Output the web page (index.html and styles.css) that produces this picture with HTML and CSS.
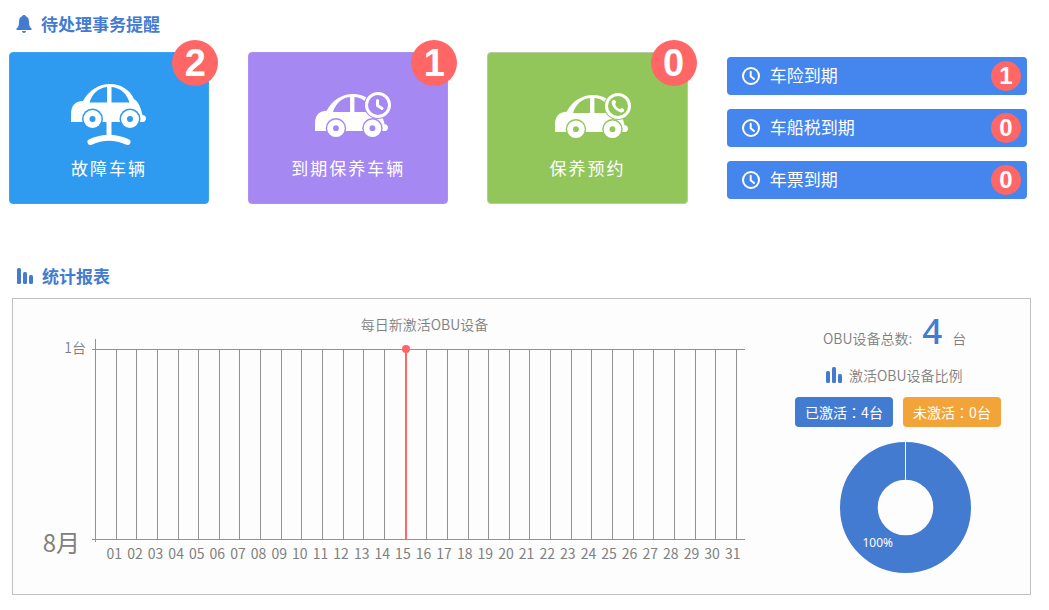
FILE: index.html
```html
<!DOCTYPE html>
<html lang="zh-CN">
<head>
<meta charset="utf-8">
<title>待处理事务提醒</title>
<link rel="stylesheet" href="styles.css">
</head>
<body>
<svg class="defs" aria-hidden="true">
  <symbol id="car" viewBox="0 0 76 46" overflow="visible">
    <path class="ink" d="M0 38V30C0 22 4 17 12 17C18 6 28 0 39 0C50 0 59 6 63 15C68 18 70 25 71.500 31C76 31 76 37 72.500 38Z"/>
    <path class="cut" d="M18.500 18.500H36V3C27 4 21 10 18.500 18.500ZM40.500 3V18.500H58.500C56 10 50 4 40.500 3Z"/>
    <circle class="cut" cx="21.500" cy="35" r="10.500"/><circle class="cut" cx="59" cy="35" r="10.500"/>
    <circle class="ink" cx="21.500" cy="35" r="9"/><circle class="ink" cx="59" cy="35" r="9"/>
    <circle class="cut" cx="21.500" cy="35" r="3"/><circle class="cut" cx="59" cy="35" r="3"/>
  </symbol>
  <symbol id="clock" viewBox="0 0 18 18">
    <circle class="line" cx="9" cy="9" r="8"/>
    <path class="line" d="M8.700 4.800V9.300L12 12"/>
  </symbol>
</svg>
<main>
  <section class="todo">
    <h2 class="heading">
      <svg class="icon" width="16" height="18" viewBox="0 0 16 18" aria-hidden="true"><path d="M8 0C9 0 9.500.500 9.700 1.300C12 2 13 4 13 7C13 10.500 13.500 12 15.500 13.500V15H.500V13.500C2.500 12 3 10.500 3 7C3 4 4 2 6.300 1.300C6.500.500 7 0 8 0ZM6 16H10C9.800 17.300 9 18 8 18S6.200 17.300 6 16Z"/></svg>
      待处理事务提醒
    </h2>
    <div class="tiles">
      <a class="tile tile-fault" href="#">
        <svg width="76" height="62" viewBox="0 0 76 62" aria-hidden="true">
          <use href="#car" width="76" height="46"/>
          <path class="ink" d="M35.500 36H40.500V53H35.500Z"/>
          <path class="base" d="M19.500 58Q38 49.500 56.500 58"/>
        </svg>
        <span class="tile-name">故障车辆</span>
        <span class="badge badge-large">2</span>
      </a>
      <a class="tile tile-due" href="#">
        <svg width="86" height="62" viewBox="-10 -8 86 62" aria-hidden="true">
          <use href="#car" y="2" width="74" height="45"/>
          <circle class="cut" cx="63" cy="13" r="14"/>
          <circle class="ring" cx="63" cy="13" r="11.500"/>
          <path class="ring" d="M62.500 8.500V13.500L67 16.500"/>
        </svg>
        <span class="tile-name">到期保养车辆</span>
        <span class="badge badge-large">1</span>
      </a>
      <a class="tile tile-booking" href="#">
        <svg width="86" height="62" viewBox="-10 -9 86 62" aria-hidden="true">
          <use href="#car" y="2" width="74" height="45"/>
          <circle class="cut" cx="63" cy="13" r="14"/>
          <circle class="ring" cx="63" cy="13" r="11.500"/>
          <path class="ink" d="M57.500 7.500C58.500 6.500 60.500 7 61 8.500C61.400 9.800 60 10.500 60.300 11.500C60.800 13.500 62.500 15.200 64.500 16C65.500 16.300 66 15 67.200 15.300C69 15.700 70 17.500 68.500 18.700C67.500 19.500 66.500 19.700 65 19.200C61 17.800 58 14.500 56.900 11C56.500 9.500 56.600 8.400 57.500 7.500Z"/>
        </svg>
        <span class="tile-name">保养预约</span>
        <span class="badge badge-large">0</span>
      </a>
      <nav class="expiry">
        <a class="bar" href="#"><svg width="18" height="18" aria-hidden="true"><use href="#clock"/></svg><span class="bar-name">车险到期</span><span class="badge">1</span></a>
        <a class="bar" href="#"><svg width="18" height="18" aria-hidden="true"><use href="#clock"/></svg><span class="bar-name">车船税到期</span><span class="badge">0</span></a>
        <a class="bar" href="#"><svg width="18" height="18" aria-hidden="true"><use href="#clock"/></svg><span class="bar-name">年票到期</span><span class="badge">0</span></a>
      </nav>
    </div>
  </section>

  <section class="report">
    <h2 class="heading">
      <svg class="icon" width="16" height="16" viewBox="0 0 16 16" aria-hidden="true"><rect width="4" height="16" rx="1.500"/><rect x="6" y="4" width="4" height="12" rx="1.500"/><rect x="12" y="7" width="4" height="9" rx="1.500"/></svg>
      统计报表
    </h2>
    <div class="panel">
      <div class="chart">
        <div class="scale"><span>1台</span><span class="month">8月</span></div>
        <div class="graph">
          <h3 class="graph-title">每日新激活OBU设备</h3>
          <div class="plot">
            <i></i><i></i><i></i><i></i><i></i><i></i><i></i><i></i><i></i><i></i><i></i><i></i><i></i><i></i><i class="active"></i><i></i><i></i><i></i><i></i><i></i><i></i><i></i><i></i><i></i><i></i><i></i><i></i><i></i><i></i><i></i><i></i>
          </div>
          <ol class="days">
            <li>01</li><li>02</li><li>03</li><li>04</li><li>05</li><li>06</li><li>07</li><li>08</li><li>09</li><li>10</li><li>11</li><li>12</li><li>13</li><li>14</li><li>15</li><li>16</li><li>17</li><li>18</li><li>19</li><li>20</li><li>21</li><li>22</li><li>23</li><li>24</li><li>25</li><li>26</li><li>27</li><li>28</li><li>29</li><li>30</li><li>31</li>
          </ol>
        </div>
      </div>
      <div class="stats">
        <p class="total">OBU设备总数: <strong>4</strong> <span>台</span></p>
        <h3 class="ratio-title">
          <svg class="icon" width="16" height="16" viewBox="0 0 16 16" aria-hidden="true"><rect y="4" width="4" height="12" rx="1.500"/><rect x="6" width="4" height="16" rx="1.500"/><rect x="12" y="7" width="4" height="9" rx="1.500"/></svg>
          激活OBU设备比例
        </h3>
        <div class="tags">
          <span class="tag">已激活<span class="colon" lang="zh-Hant">：</span>4台</span>
          <span class="tag tag-off">未激活<span class="colon" lang="zh-Hant">：</span>0台</span>
        </div>
        <svg class="donut" width="131" height="131" viewBox="0 0 132 132" role="img" aria-label="已激活 100%">
          <circle class="donut-ring" cx="66" cy="66" r="47"/>
          <path class="donut-split" d="M66 0V38"/>
          <text x="38" y="106">100%</text>
        </svg>
      </div>
    </div>
  </section>
</main>
</body>
</html>
```
FILE: styles.css
```css
:root {
  --primary: #437bd1;
  --alert: #ff6666;
  --grid: #929292;
  --muted: #808080;
}

* { box-sizing: border-box; }

body {
  margin: 0;
  background: #fff;
  color: var(--muted);
  font: 14px/20px "Noto Sans CJK SC", sans-serif;
}

a { color: inherit; text-decoration: none; }
h2, h3, p, ol { margin: 0; padding: 0; font-weight: inherit; }

.defs { display: block; width: 0; height: 0; }
.icon { fill: var(--primary); }
.ink { fill: #fff; }
.cut { fill: var(--tile); }
.line { fill: none; stroke: #fff; stroke-width: 2; stroke-linecap: round; }
.ring { fill: none; stroke: #fff; stroke-width: 3; stroke-linecap: round; }
.base { fill: none; stroke: #fff; stroke-width: 6; stroke-linecap: round; }

.heading {
  display: flex;
  align-items: center;
  gap: 9px;
  color: var(--primary);
  font-size: 17px;
  line-height: 24px;
  font-weight: 700;
}

/* Pending items */
.todo { padding: 12px 22px 0 9px; }
.todo .heading { padding-left: 7px; margin-bottom: 16px; }

.tiles {
  display: grid;
  grid-template-columns: 2fr 2fr 2fr 3fr;
  gap: 39px;
}

.tile {
  position: relative;
  display: flex;
  flex-direction: column;
  align-items: center;
  padding: 31px 0 23px;
  border: 1px solid var(--edge);
  border-radius: 4px;
  background: var(--tile);
  color: #fff;
}
.tile-fault { --tile: #2f9bf0; --edge: #3fa2ee; }
.tile-due { --tile: #a588f2; --edge: #ac92f0; }
.tile-booking { --tile: #92c65b; --edge: #b9c8a8; }

.tile-name {
  margin-top: 10px;
  font-size: 17px;
  line-height: 24px;
  letter-spacing: 2px;
}

.badge {
  width: 30px;
  border-radius: 50%;
  background: var(--alert);
  color: #fff;
  font: 700 24px/30px "Liberation Sans", Arial, sans-serif;
  text-align: center;
}
.badge-large {
  position: absolute;
  top: -13px;
  right: -10px;
  width: 46px;
  font-size: 38px;
  line-height: 46px;
}

.expiry {
  display: flex;
  flex-direction: column;
  gap: 14px;
  padding-top: 5px;
}
.bar {
  display: flex;
  align-items: center;
  gap: 10px;
  height: 38px;
  padding: 0 6px 0 15px;
  border-radius: 4px;
  background: #4486ee;
  color: #fff;
  font-size: 17px;
}
.bar-name { flex: 1; padding-bottom: 3px; }

/* Statistics */
.report { padding: 60px 18px 15px 12px; }
.report .heading { padding-left: 5px; margin-bottom: 10px; }

.panel {
  display: flex;
  border: 1px solid #c0c0c0;
  background: #fdfdfd;
  font-weight: 350;
}

.chart {
  flex: 1;
  display: flex;
  padding: 15px 35px 31px 0;
}
.scale {
  display: flex;
  flex-direction: column;
  justify-content: space-between;
  align-items: flex-end;
  width: 79px;
  padding: 23px 6px 5px 0;
}
.month {
  margin-right: 6px;
  font-size: 24px;
  line-height: 32px;
  font-weight: 400;
}
.graph { flex: 1; }
.graph-title {
  padding-left: 12px;
  margin-bottom: 15px;
  font-size: 14px;
  text-align: center;
}

.plot {
  position: relative;
  display: flex;
  height: 191px;
  padding: 0 8px 0 4px;
  border: solid var(--grid);
  border-width: 1px 0;
}
.plot::before {
  content: "";
  position: absolute;
  top: -11px;
  bottom: -3px;
  left: 3px;
  width: 1px;
  background: var(--grid);
}
.plot i { flex: 1; border-right: 1px solid var(--grid); }
.plot .active { position: relative; border-right: 2px solid var(--alert); }
.active::after {
  content: "";
  position: absolute;
  top: -5px;
  right: -5px;
  width: 8px;
  height: 8px;
  border-radius: 50%;
  background: var(--alert);
}

.days {
  display: grid;
  grid-template-columns: repeat(31, 1fr);
  margin-top: 3px;
  padding: 0 2px 0 12px;
  list-style: none;
  font-weight: 400;
  text-align: center;
}

.stats {
  width: 250px;
  padding: 12px 0 0 15px;
}
.total {
  display: flex;
  align-items: baseline;
  gap: 10px;
  padding-left: 28px;
  line-height: 40px;
}
.total strong {
  color: var(--primary);
  font: 500 35px/40px "Noto Sans", sans-serif;
}
.ratio-title {
  display: flex;
  align-items: center;
  gap: 7px;
  margin-top: 7px;
  padding-left: 31px;
  font-size: 14px;
}
.tags { display: flex; gap: 10px; margin: 12px 0 15px; }
.tag {
  width: 98px;
  border-radius: 4px;
  background: var(--primary);
  color: #fff;
  font-weight: 400;
  line-height: 30px;
  text-align: center;
}
.tag-off { background: #f2a439; }
.colon { font-family: "Noto Sans CJK TC", sans-serif; }

.donut { display: block; margin-left: 45px; }
.donut-ring { fill: none; stroke: var(--primary); stroke-width: 38; }
.donut-split { stroke: #fff; stroke-width: 1; }
.donut text {
  fill: #fff;
  font: 12px "Noto Sans", sans-serif;
  text-anchor: middle;
}
```
